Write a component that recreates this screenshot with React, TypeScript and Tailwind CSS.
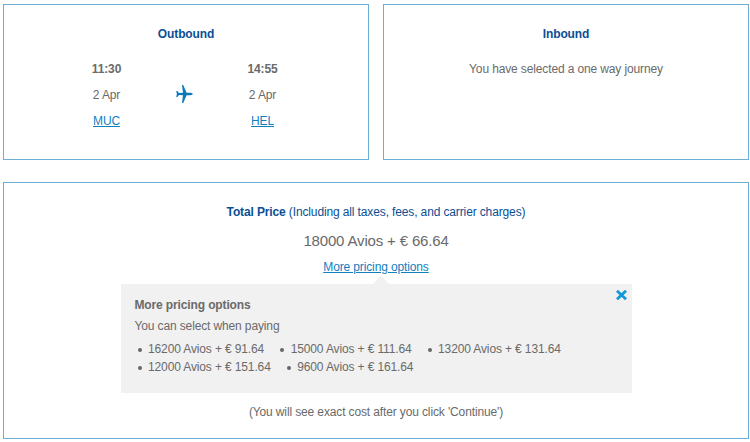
import React from "react";

const options = [
  ["16200 Avios + € 91.64", "15000 Avios + € 111.64", "13200 Avios + € 131.64"],
  ["12000 Avios + € 151.64", "9600 Avios + € 161.64"],
];

function Plane() {
  return (
    <svg width="17" height="18" viewBox="0 0 17 18" fill="#0b78bd">
      <path d="M6 0H7.2L10.6 7.8H14.5Q16.8 8.2 16.8 9Q16.8 9.8 14.5 10.2H10.6L7.2 18H6L7 10.2L3 9.9L1.2 12H0.2L0.9 9L0.2 6H1.2L3 8.1L7 7.8Z" />
    </svg>
  );
}

function Stop({ time, date, code }: { time: string; date: string; code: string }) {
  return (
    <div className="flex w-[80px] flex-col items-center leading-[26px]">
      <strong>{time}</strong>
      <span>{date}</span>
      <a href="#" className="text-[#1280bf] underline">{code}</a>
    </div>
  );
}

function Box({ className, children }: { className: string; children: React.ReactNode }) {
  return <section className={`flex flex-col items-center border border-[#6bafd8] ${className}`}>{children}</section>;
}

export default function App() {
  return (
    <main className="h-[442px] w-[750px] overflow-hidden bg-white pl-[3px] pt-[4px] font-['Liberation_Sans',Arial,sans-serif] text-[12px] tracking-[-0.13px] text-[#6a6a6a]">
      <div className="flex gap-[14px]">
        <Box className="h-[156px] w-[366px] pt-[19px]">
          <h2 className="font-bold leading-[20px] text-[#0a4f94]">Outbound</h2>
          <div className="mr-[3px] mt-[12px] flex w-[236px] items-center justify-between">
            <Stop time="11:30" date="2 Apr" code="MUC" />
            <div className="-mt-[3px]"><Plane /></div>
            <Stop time="14:55" date="2 Apr" code="HEL" />
          </div>
        </Box>
        <Box className="h-[156px] w-[366px] pt-[19px]">
          <h2 className="font-bold leading-[20px] text-[#0a4f94]">Inbound</h2>
          <p className="mt-[12px] leading-[26px]">You have selected a one way journey</p>
        </Box>
      </div>
      <Box className="mt-[22px] h-[257px] w-[746px] pt-[18px]">
        <h2 className="leading-[22px] text-[#0a4f94]">
          <strong>Total Price</strong> (Including all taxes, fees, and carrier charges)
        </h2>
        <p className="mt-[5px] text-[15px] leading-[26px] tracking-[-0.16px]">18000 Avios + € 66.64</p>
        <a href="#" className="leading-[26px] text-[#1280bf] underline">More pricing options</a>
        <div className="relative mt-[4px] h-[109px] w-[511px] bg-[#f1f1f1] pl-[14px] pt-[11px]">
          <svg className="absolute -top-[9px] left-[252px]" width="16" height="9" viewBox="0 0 16 9">
            <path d="M0 9L8 0L16 9Z" fill="#f1f1f1" />
          </svg>
          <svg className="absolute right-[5px] top-[6px]" width="11" height="10" viewBox="0 0 11 10">
            <path d="M2 1.7L9 8.3M9 1.7L2 8.3" stroke="#0f97d8" strokeWidth="2.8" strokeLinecap="square" />
          </svg>
          <h3 className="font-bold leading-[20px]">More pricing options</h3>
          <p className="leading-[22px]">You can select when paying</p>
          <div className="mt-[3px]">
            {options.map((row, i) => (
              <ul key={i} className="flex gap-[16px] pl-[3px] leading-[18px]">
                {row.map((text) => (
                  <li key={text} className="flex items-center gap-[6.5px]">
                    <span className="mt-px size-[4px] rounded-full bg-[#666]" />
                    {text}
                  </li>
                ))}
              </ul>
            ))}
          </div>
        </div>
        <p className="mt-[9px] leading-[20px]">(You will see exact cost after you click 'Continue')</p>
      </Box>
    </main>
  );
}
